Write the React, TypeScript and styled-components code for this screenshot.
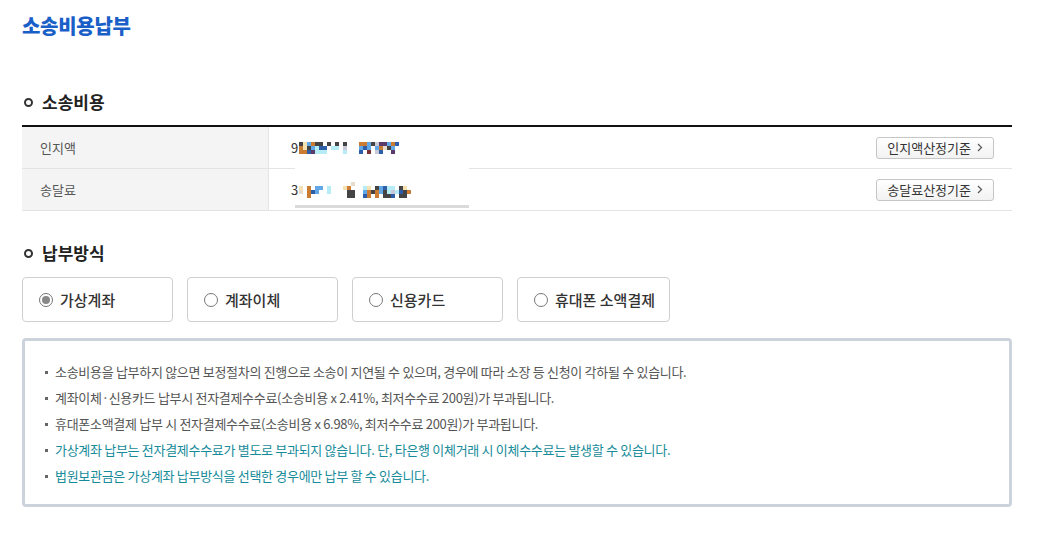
import React from 'react';
import styled, { createGlobalStyle } from 'styled-components';

const GlobalStyle = createGlobalStyle`
  html, body {
    margin: 0;
    padding: 0;
    background: #fff;
    font-family: "Noto Sans CJK KR", "Noto Sans", sans-serif;
    color: #333;
  }
`;

const Page = styled.div`
  padding: 12px 25px 30px 22px;
`;

const PageTitle = styled.h1`
  margin: 0;
  font-size: 20px;
  line-height: 28px;
  font-weight: 800;
  color: #1a5fc8;
  letter-spacing: -0.3px;
`;

const SectionTitle = styled.h2<{ $top: number }>`
  display: flex;
  align-items: center;
  gap: 9px;
  margin: ${(p) => p.$top}px 0 0 2px;
  font-size: 17px;
  line-height: 24px;
  font-weight: 700;
  color: #222;

  &::before {
    content: '';
    width: 5px;
    height: 5px;
    border: 2px solid #333;
    border-radius: 50%;
  }
`;

const Table = styled.div`
  margin-top: 11px;
  border-top: 2px solid #111;
`;

const Row = styled.div`
  display: grid;
  grid-template-columns: 247px 1fr;
  height: 41px;
  border-bottom: 1px solid #e4e4e4;
`;

const Label = styled.div`
  display: flex;
  align-items: center;
  padding-left: 18px;
  background: #f4f4f4;
  border-right: 1px solid #e4e4e4;
  font-size: 13px;
  color: #555;
`;

const Value = styled.div`
  position: relative;
  display: flex;
  align-items: center;
  justify-content: space-between;
  padding: 0 18px 0 22px;
`;

const Overlay = styled.div`
  position: absolute;
  left: 26px;
  top: -1px;
  width: 174px;
  height: 37px;
  background: #fff;
  border-bottom: 3px solid #dadada;
`;

const Masked = styled.div`
  position: relative;
  z-index: 1;
  display: flex;
  align-items: center;
  gap: 1px;
  font-size: 13px;
  color: #333;
`;

const SmallButton = styled.button`
  display: flex;
  align-items: center;
  gap: 6px;
  height: 22px;
  padding: 0 10px;
  border: 1px solid #c6c6c6;
  border-radius: 3px;
  background: linear-gradient(#ffffff, #f2f2f2);
  font-family: inherit;
  font-size: 13px;
  color: #333;
  cursor: pointer;
`;

const Methods = styled.div`
  display: flex;
  gap: 14px;
  margin-top: 12px;
`;

const Method = styled.label<{ $wide?: boolean }>`
  display: flex;
  align-items: center;
  gap: 7px;
  box-sizing: border-box;
  width: ${(p) => (p.$wide ? 153 : 151)}px;
  height: 45px;
  padding-left: 16px;
  border: 1px solid #cfcfcf;
  border-radius: 4px;
  font-size: 15px;
  font-weight: 500;
  color: #333;
  cursor: pointer;
`;

const RadioMark = styled.span<{ $checked?: boolean }>`
  position: relative;
  box-sizing: border-box;
  width: 14px;
  height: 14px;
  border: 1px solid #777;
  border-radius: 50%;
  background: #fff;

  &::after {
    content: '';
    display: ${(p) => (p.$checked ? 'block' : 'none')};
    position: absolute;
    left: 2px;
    top: 2px;
    width: 8px;
    height: 8px;
    border-radius: 50%;
    background: #888;
  }
`;

const InfoBox = styled.ul`
  margin: 16px 0 0;
  padding: 18px 0 15px 20px;
  list-style: none;
  border: 3px solid #ccd3dd;
  border-radius: 4px;
`;

const InfoItem = styled.li<{ $accent?: boolean }>`
  display: flex;
  align-items: center;
  gap: 7px;
  font-size: 13px;
  line-height: 26px;
  letter-spacing: -0.3px;
  color: ${(p) => (p.$accent ? '#168b9a' : '#555')};

  &::before {
    content: '';
    width: 3px;
    height: 3px;
    background: #666;
  }
`;

const palette: Record<string, string> = {
  d: '#444444',
  b: '#2f5ea8',
  l: '#62a8e6',
  c: '#b6ecf6',
  o: '#c97c32',
  y: '#f6e2b0',
  p: '#5b3a6c',
  r: '#7b3131',
  g: '#c8c8d8',
  t: '#e8dccc',
};

// pixel rows of the masked amounts, one char per 4px block
const mosaic = (rows: string[]) => (
  <svg width={rows[0].length * 4} height={rows.length * 4 + 2} style={{ display: 'block' }}>
    {rows.flatMap((row, y) =>
      row.split('').map((ch, x) =>
        palette[ch] ? <rect key={`${x}-${y}`} x={x * 4} y={y * 4 + 1} width={4} height={4} fill={palette[ch]} /> : null
      )
    )}
  </svg>
);

const stampAmount = mosaic([
  'dylodd.d.d.d...ooldgpplob',
  'oydlcbb.cc.g...lbl.lotdl.',
  'oobpccc....c...b.r.gb..p.',
]);

const deliveryAmount = mosaic([
  '.............t..............',
  'y.o.ll.c...yo...cy.dlbcc.dy.lbl',
  't.obl..c....dd..lodoldcgcbdol..',
  '..o.........dd..bo.o.ddb.dd.l..',
]);

const Chevron = () => (
  <svg width="6" height="9" viewBox="0 0 6 9">
    <path d="M1 1l3.5 3.5L1 8" fill="none" stroke="#555" strokeWidth="1.2" />
  </svg>
);

const notices = [
  { text: '소송비용을 납부하지 않으면 보정절차의 진행으로 소송이 지연될 수 있으며, 경우에 따라 소장 등 신청이 각하될 수 있습니다.' },
  { text: '계좌이체·신용카드 납부시 전자결제수수료(소송비용 x 2.41%, 최저수수료 200원)가 부과됩니다.' },
  { text: '휴대폰소액결제 납부 시 전자결제수수료(소송비용 x 6.98%, 최저수수료 200원)가 부과됩니다.' },
  { text: '가상계좌 납부는 전자결제수수료가 별도로 부과되지 않습니다. 단, 타은행 이체거래 시 이체수수료는 발생할 수 있습니다.', accent: true },
  { text: '법원보관금은 가상계좌 납부방식을 선택한 경우에만 납부 할 수 있습니다.', accent: true },
];

const methods = ['가상계좌', '계좌이체', '신용카드', '휴대폰 소액결제'];

const App: React.FC = () => {
  return (
    <Page>
      <GlobalStyle />
      <PageTitle>소송비용납부</PageTitle>

      <SectionTitle $top={50}>소송비용</SectionTitle>
      <Table>
        <Row>
          <Label>인지액</Label>
          <Value>
            <Masked>
              <span>9</span>
              {stampAmount}
            </Masked>
            <SmallButton>
              인지액산정기준 <Chevron />
            </SmallButton>
          </Value>
        </Row>
        <Row>
          <Label>송달료</Label>
          <Value>
            <Overlay />
            <Masked>
              <span>3</span>
              {deliveryAmount}
            </Masked>
            <SmallButton>
              송달료산정기준 <Chevron />
            </SmallButton>
          </Value>
        </Row>
      </Table>

      <SectionTitle $top={30}>납부방식</SectionTitle>
      <Methods>
        {methods.map((m, i) => (
          <Method key={m} $wide={i === 3}>
            <RadioMark $checked={i === 0} />
            {m}
          </Method>
        ))}
      </Methods>

      <InfoBox>
        {notices.map((n) => (
          <InfoItem key={n.text} $accent={n.accent}>
            {n.text}
          </InfoItem>
        ))}
      </InfoBox>
    </Page>
  );
};

export default App;
